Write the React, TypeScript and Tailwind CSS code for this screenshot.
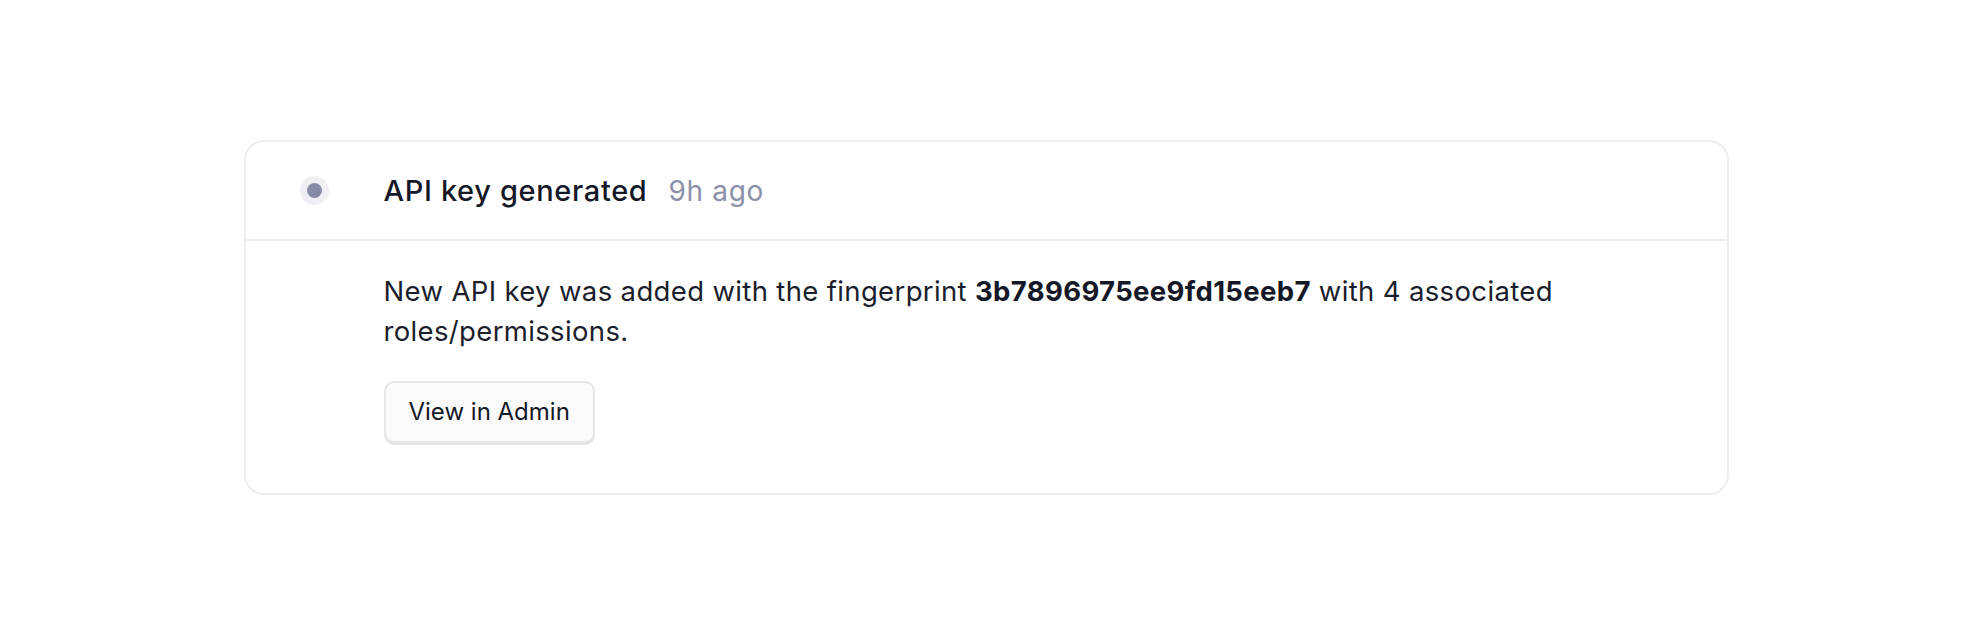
import React from "react";

export default function App() {
  return (
    <div
      className="flex h-screen w-full items-center justify-center bg-white"
      style={{ fontFamily: "Inter, 'Noto Sans', sans-serif" }}
    >
      <div className="w-[1485px] rounded-[20px] border-2 border-[#ededf1] bg-white">
        <div className="flex h-[99px] items-center border-b-2 border-[#ededf1] pl-[54px]">
          <div className="flex h-[29px] w-[29px] shrink-0 items-center justify-center rounded-full bg-[#f0f0f4]">
            <div className="h-[15px] w-[15px] rounded-full bg-[#878ba5]" />
          </div>
          <div className="ml-[55px] mt-[2px] flex items-baseline gap-[21px]">
            <span className="text-[29px] font-medium tracking-[0.65px] text-[#151826]">
              API key generated
            </span>
            <span className="text-[28px] tracking-[0.7px] text-[#8b90aa]">9h ago</span>
          </div>
        </div>
        <div className="pb-[50px] pl-[138px] pt-[30px]">
          <p className="max-w-[1250px] text-[27.5px] leading-[40px] tracking-[0.35px] text-[#1b1e2c]">
            New API key was added with the fingerprint{" "}
            <span className="font-bold text-[#151826]">3b7896975ee9fd15eeb7</span> with 4
            associated roles/permissions.
          </p>
          <button className="mt-[30px] h-[62px] rounded-[10px] border-2 border-[#e6e6ea] bg-[#fafafa] px-[23px] text-[24px] text-[#151826] shadow-[0_2px_0_#e4e4e8]">
            View in Admin
          </button>
        </div>
      </div>
    </div>
  );
}
